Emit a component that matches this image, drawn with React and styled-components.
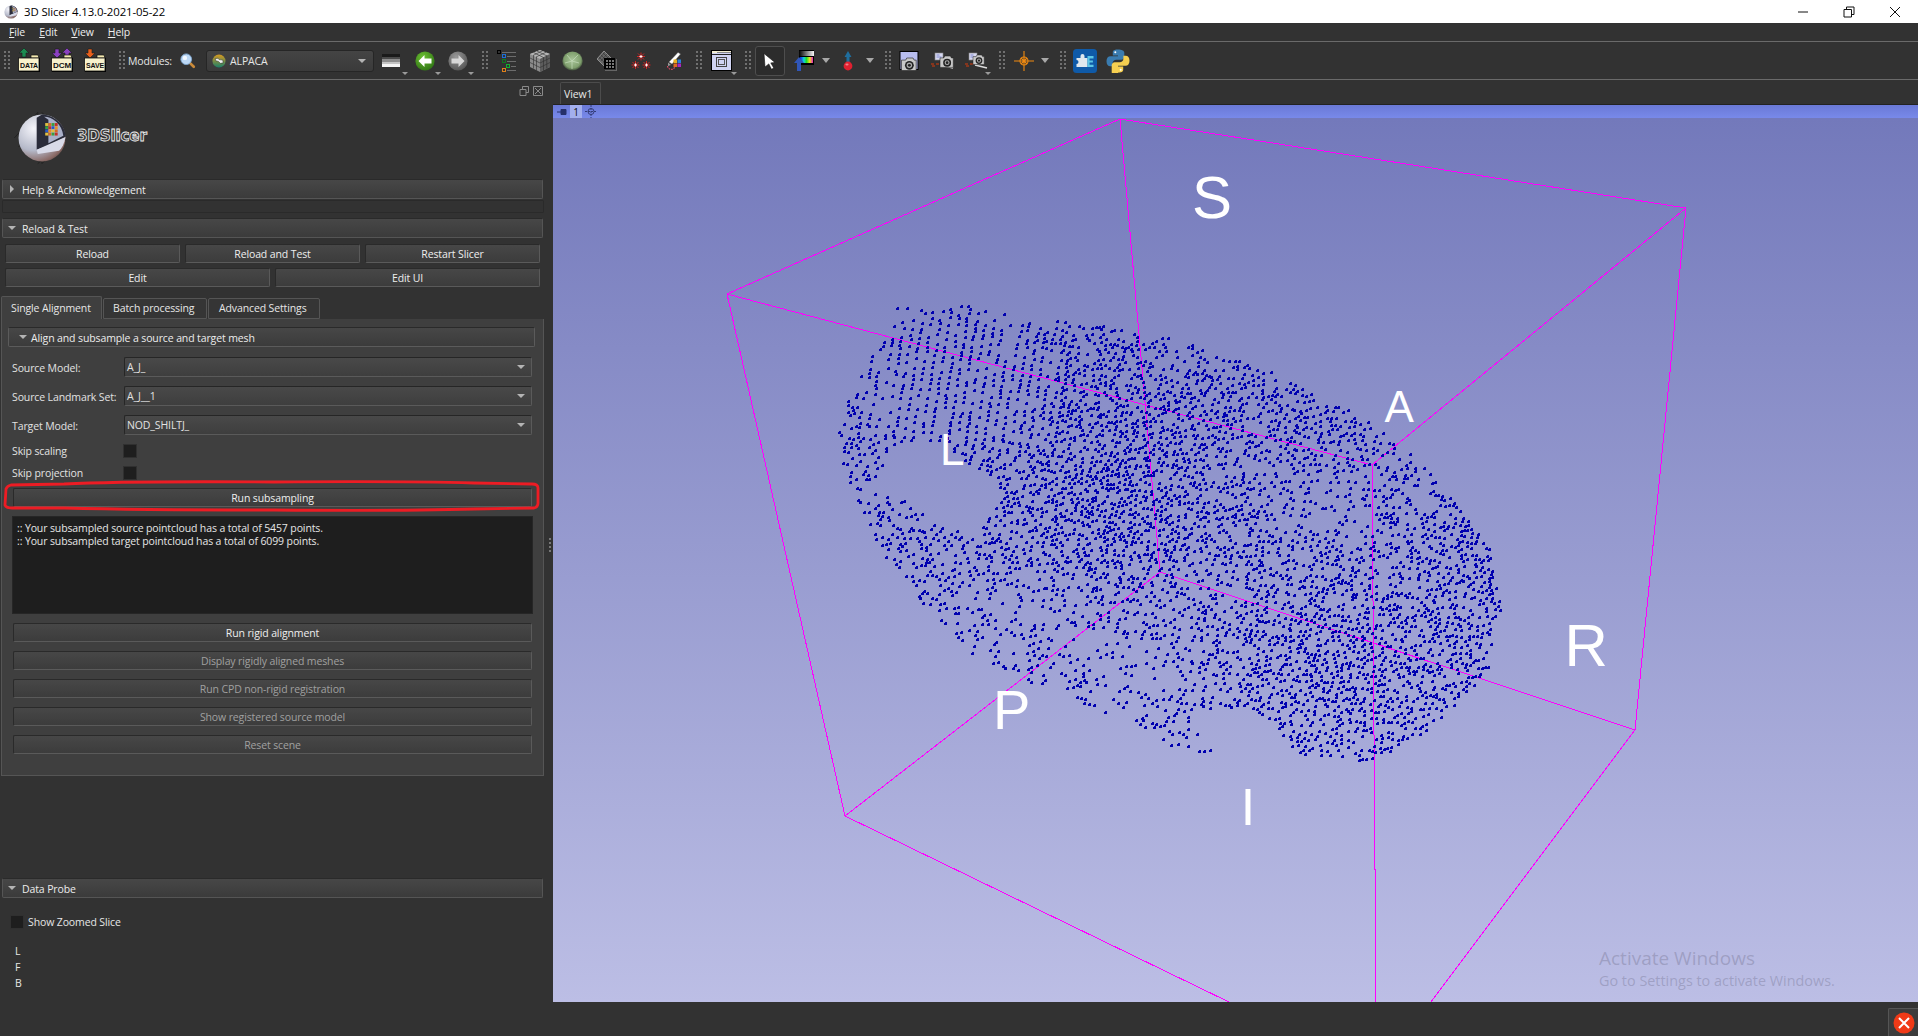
import { useMemo } from "react";
import styled, { createGlobalStyle } from "styled-components";

const GlobalStyle = createGlobalStyle`
  html, body { margin: 0; padding: 0; background: #323232; }
  body { font-family: "Open Sans", "Noto Sans", sans-serif; font-size: 10.5px; letter-spacing: -0.12px; color: #e6e6e6; overflow: hidden; }
  * { box-sizing: border-box; }
`;

const Page = styled.div`
  width: 1918px;
  height: 1036px;
  display: flex;
  flex-direction: column;
  background: #323232;
`;

const TitleBar = styled.div`
  height: 23px;
  background: #fff;
  display: flex;
  align-items: center;
  color: #000;
  font-size: 11.4px;
  padding-left: 2px;
`;
const TitleText = styled.span`
  margin-left: 4px;
  flex: 1;
`;
const WinButton = styled.div`
  width: 46px;
  height: 23px;
  display: flex;
  align-items: center;
  justify-content: center;
`;

const MenuBar = styled.div`
  height: 19px;
  display: flex;
  align-items: center;
  border-bottom: 1px solid #6a6a6a;
  padding-left: 9px;
  gap: 14px;
  color: #eee;
`;
const MenuItem = styled.span`
  &::first-letter { text-decoration: underline; }
`;

const Toolbar = styled.div`
  height: 38px;
  display: flex;
  align-items: center;
  border-bottom: 1px solid #6a6a6a;
`;
const Grip = styled.div`
  width: 6px;
  height: 20px;
  flex: none;
  margin-left: ${(p) => p.$ml}px;
  margin-right: ${(p) => p.$mr ?? 2}px;
  background: repeating-linear-gradient(to bottom, #707070 0 2px, transparent 2px 4px);
  -webkit-mask: repeating-linear-gradient(to right, #000 0 2px, transparent 2px 4px);
  mask: repeating-linear-gradient(to right, #000 0 2px, transparent 2px 4px);
`;
const Tool = styled.div`
  position: relative;
  width: ${(p) => p.$w ?? 33}px;
  height: 28px;
  flex: none;
  display: flex;
  align-items: center;
  justify-content: center;
`;
const ActiveTool = styled(Tool)`
  height: 30px;
  background: #2c2c2c;
  border: 1px solid #4e4e4e;
  border-radius: 3px;
`;
const Caret = styled.span`
  width: 0;
  height: 0;
  flex: none;
  border-left: 4px solid transparent;
  border-right: 4px solid transparent;
  border-top: 5px solid #a8a8a8;
`;
const MiniCaret = styled.span`
  position: absolute;
  right: ${(p) => p.$r ?? 2}px;
  bottom: 0;
  width: 0;
  height: 0;
  border-left: 3px solid transparent;
  border-right: 3px solid transparent;
  border-top: 3px solid #9a9a9a;
`;
const ModulesLabel = styled.span`
  width: 43px;
  flex: none;
  margin-left: 1px;
  white-space: nowrap;
`;
const ModuleCombo = styled.div`
  width: 168px;
  height: 22px;
  flex: none;
  margin-left: 2px;
  display: flex;
  align-items: center;
  gap: 4px;
  padding-left: 5px;
  position: relative;
  background: linear-gradient(#444, #3a3a3a);
  border: 1px solid #262626;
  border-radius: 3px;
  &::after {
    content: "";
    position: absolute;
    right: 7px;
    top: 8px;
    border-left: 4px solid transparent;
    border-right: 4px solid transparent;
    border-top: 4px solid #b4b4b4;
  }
`;

const Main = styled.div`
  flex: 1;
  display: flex;
  min-height: 0;
`;

const Dock = styled.div`
  width: 553px;
  flex: none;
  padding: 0 9px 0 2px;
  position: relative;
  display: flex;
  flex-direction: column;
`;
const DockTitle = styled.div`
  height: 20px;
  display: flex;
  justify-content: flex-end;
  align-items: center;
  gap: 4px;
  padding: 0 1px 0 0;
`;
const DockIcon = styled.span`
  width: 10px;
  height: 10px;
  display: block;
`;
const Splitter = styled.div`
  position: absolute;
  right: 2px;
  top: 458px;
  width: 2px;
  height: 16px;
  background: repeating-linear-gradient(to bottom, #777 0 2px, transparent 2px 4px);
`;
const LogoRow = styled.div`
  height: 79px;
  display: flex;
  align-items: center;
  padding: 0 0 4px 8px;
  gap: 3px;
`;
const LogoText = styled.span`
  font-family: "DejaVu Sans", sans-serif;
  font-weight: 700;
  font-size: 15.2px;
  letter-spacing: -0.2px;
  color: #3a3a3a;
  -webkit-text-stroke: 0.8px #f0f0f0;
  margin-top: -4px;
`;

const CollapseHeader = styled.div`
  height: 20px;
  flex: none;
  display: flex;
  align-items: center;
  position: relative;
  margin-right: ${(p) => (p.$inner ? 0 : 1)}px;
  padding: 1px 0 0 ${(p) => (p.$inner ? 22 : 19)}px;
  background: linear-gradient(#474747, #3b3b3b);
  border: 1px solid #555;
  border-top-color: #2a2a2a;
  border-radius: 2px;
  color: #ececec;
`;
const DownArrow = styled.span`
  position: absolute;
  left: ${(p) => p.$left ?? 5}px;
  top: 7px;
  border-left: 4px solid transparent;
  border-right: 4px solid transparent;
  border-top: 4px solid #b4b4b4;
`;
const RightArrow = styled.span`
  position: absolute;
  left: 7px;
  top: 5px;
  border-top: 4px solid transparent;
  border-bottom: 4px solid transparent;
  border-left: 4px solid #b4b4b4;
`;
const EmptyFrame = styled.div`
  height: 13px;
  margin: 1px 0 5px;
  border: 1px solid #2a2a2a;
  border-radius: 1px;
`;
const ButtonGrid = styled.div`
  display: grid;
  grid-template-columns: repeat(${(p) => p.$cols}, 1fr);
  gap: 5px;
  padding: 0 4px 0 3px;
  margin-top: ${(p) => p.$top}px;
`;
const PushButton = styled.div`
  height: 19px;
  display: flex;
  align-items: center;
  justify-content: center;
  background: linear-gradient(#474747, #3c3c3c);
  border: 1px solid #5a5a5a;
  border-top-color: #2a2a2a;
  border-left-color: #2a2a2a;
  border-radius: 2px;
  color: ${(p) => (p.$disabled ? "#a0a0a0" : "#eee")};
`;
const ActionButton = styled(PushButton)`
  margin-left: 1px;
`;

const TabRow = styled.div`
  display: flex;
  align-items: flex-end;
  gap: 1px;
  margin: 9px 0 0 -1px;
  height: 23px;
`;
const Tab = styled.div`
  width: ${(p) => p.$w}px;
  height: ${(p) => (p.$active ? 23 : 21)}px;
  padding: 0 0 1px ${(p) => p.$pad}px;
  display: flex;
  align-items: center;
  background: ${(p) => (p.$active ? "#3f3f3f" : "#353535")};
  border: 1px solid #555;
  border-bottom: ${(p) => (p.$active ? "none" : "1px solid #555")};
  border-radius: 2px 2px 0 0;
`;
const TabPane = styled.div`
  height: 457px;
  margin-left: -1px;
  padding: 8px 11px 0 10px;
  background: #3f3f3f;
  border: 1px solid #555;
  border-top: none;
  display: flex;
  flex-direction: column;
`;
const InnerHeader = styled(CollapseHeader)`
  margin: 0 -3px 0 -4px;
  border-color: #5b5b5b;
  border-top-color: #2a2a2a;
`;
const FormRows = styled.div`
  display: grid;
  gap: 9px;
  margin-top: 10px;
`;
const FormRow = styled.div`
  display: grid;
  grid-template-columns: 112px 1fr;
  align-items: center;
  color: #e2e2e2;
  > span { padding-top: 1px; }
`;
const ComboBox = styled.div`
  height: 20px;
  display: flex;
  align-items: center;
  padding-left: 2px;
  position: relative;
  background: linear-gradient(#494949, #3e3e3e);
  border: 1px solid #262626;
  border-right-color: #5a5a5a;
  border-bottom-color: #5a5a5a;
  border-radius: 2px;
  &::after {
    content: "";
    position: absolute;
    right: 6px;
    top: 7px;
    border-left: 4px solid transparent;
    border-right: 4px solid transparent;
    border-top: 4px solid #b4b4b4;
  }
`;
const CheckRows = styled.div`
  display: grid;
  gap: 8px;
  margin-top: 8px;
`;
const CheckRow = styled.div`
  display: grid;
  grid-template-columns: 111px 14px;
  height: 14px;
  align-items: center;
  color: #e2e2e2;
  > span:first-child { padding-top: 1px; }
`;
const CheckBox = styled.span`
  width: 14px;
  height: 14px;
  display: block;
  background: #1e1e1e;
  border: 1px solid #303030;
`;
const ActionStack = styled.div`
  display: grid;
  gap: 9px;
  margin-top: 9px;
`;
const Highlighted = styled.div`
  position: relative;
`;
const RedOval = styled.svg`
  position: absolute;
  left: -8px;
  top: -7px;
  width: 536px;
  height: 32px;
  overflow: visible;
`;
const OutputBox = styled.div`
  height: 98px;
  margin-right: -1px;
  padding: 5px 4px;
  background: #1e1e1e;
  border: 1px solid #262626;
  line-height: 12.5px;
  color: #e6e6e6;
`;
const ProbeHeader = styled(CollapseHeader)`
  margin-top: 102px;
`;
const ZoomRow = styled.div`
  display: flex;
  align-items: center;
  gap: 4px;
  margin: 16px 0 0 8px;
  > span:last-child { padding-top: 1px; }
`;
const ProbeLines = styled.div`
  margin: 14px 0 0 13px;
  line-height: 16px;
`;

const RightColumn = styled.div`
  flex: 1;
  display: flex;
  flex-direction: column;
  min-width: 0;
`;
const ViewTabs = styled.div`
  height: 25px;
  padding: 2px 0 0 7px;
  display: flex;
  border-bottom: 1px solid #222;
`;
const ViewTab = styled.div`
  width: 41px;
  display: flex;
  align-items: center;
  padding-left: 3px;
  border: 1px solid #4c4c4c;
  border-bottom: none;
  border-radius: 2px 2px 0 0;
  color: #e8e8e8;
`;
const ViewController = styled.div`
  height: 13px;
  flex: none;
  display: flex;
  align-items: center;
  padding-left: 4px;
  background: linear-gradient(#6a79d6, #7889ea);
`;
const PinIcon = styled.svg`
  width: 10px;
  height: 8px;
  margin-right: 3px;
`;
const ViewCross = styled.svg`
  width: 14px;
  height: 13px;
  margin-left: 2px;
`;
const ViewNumber = styled.span`
  width: 12px;
  height: 13px;
  display: flex;
  align-items: center;
  justify-content: center;
  background: #a3afee;
  color: #111;
  font-size: 10px;
`;
const Viewport = styled.div`
  position: relative;
  flex: 1;
  overflow: hidden;
  background: linear-gradient(#7379bb, #bcbee5);
`;
const SceneSvg = styled.svg`
  display: block;
  width: 100%;
  height: 100%;
`;
const SceneLabel = styled.text`
  font-family: "Liberation Sans", Arial, sans-serif;
  fill: #fff;
`;
const Watermark = styled.div`
  position: absolute;
  left: 1046px;
  top: 828px;
  letter-spacing: 0;
  color: rgba(120, 120, 150, 0.42);
  font-family: "Open Sans", sans-serif;
`;
const WatermarkTitle = styled.div`
  font-size: 19px;
  line-height: 24px;
`;
const WatermarkSub = styled.div`
  font-size: 14.4px;
  line-height: 22px;
`;
const StatusBar = styled.div`
  height: 34px;
  flex: none;
  display: flex;
  justify-content: flex-end;
  align-items: flex-end;
`;
const StatusButton = styled.div`
  width: 30px;
  height: 28px;
  display: flex;
  align-items: center;
  justify-content: center;
  background: #3c3c3c;
  border: 1px solid #555;
  border-right: none;
  border-bottom: none;
  border-radius: 2px 0 0 0;
`;

/* ---------- toolbar icons ---------- */

const Arrow = ({ x, color, down }) => (
  <path
    d={down ? `M${x - 2} 1h4v4h3l-5 5-5-5h3z` : `M${x} 0l5 5h-3v4h-4v-4h-3z`}
    fill={color}
    stroke="#1c1c1c"
    strokeWidth="0.6"
  />
);

const FolderIcon = ({ label, children }) => (
  <svg width="24" height="26" viewBox="0 0 24 26">
    {children}
    <path d="M14 7h7l1 3H14z" fill="#f3e8b0" stroke="#111" strokeWidth="0.7" />
    <rect x="2" y="10" width="21" height="14" fill="#000" />
    <rect x="1.5" y="10" width="20.5" height="13" fill="#f8f2cc" stroke="#111" strokeWidth="0.8" />
    <text x="3" y="20" fontFamily="Liberation Sans, sans-serif" fontSize="7.5" fontWeight="700" fill="#111" textLength="18" lengthAdjust="spacingAndGlyphs">
      {label}
    </text>
  </svg>
);

const SearchIcon = () => (
  <svg width="16" height="16" viewBox="0 0 18 18">
    <path d="M10.5 10.5l5 5" stroke="#c98a3a" strokeWidth="3" strokeLinecap="round" />
    <circle cx="7" cy="7" r="6" fill="#bcd8f5" stroke="#7fa8d2" />
    <circle cx="5.5" cy="5.5" r="2.5" fill="#f2f8ff" />
  </svg>
);

const AlpacaIcon = () => (
  <svg width="14" height="14" viewBox="0 0 15 15">
    <defs>
      <linearGradient id="alp" x1="0" y1="0" x2="0" y2="1">
        <stop offset="0" stopColor="#d89a20" />
        <stop offset="1" stopColor="#1a7f6a" />
      </linearGradient>
    </defs>
    <circle cx="7.5" cy="7.5" r="7" fill="url(#alp)" />
    <path d="M3.5 5l3-.5 1 1.5 4 .5.5 3-3 .5-2-2-3-.8z" fill="#f2f2f2" stroke="#222" strokeWidth="0.5" />
  </svg>
);

const GradientBars = () => (
  <svg width="18" height="13" viewBox="0 0 18 13" shapeRendering="crispEdges">
    {["#1a1a1a", "#4a4a4a", "#8c8c8c", "#c4c4c4", "#f4f4f4"].map((c, i) => (
      <rect key={c} x="0" y={i * 2.6} width="18" height="2.6" fill={c} />
    ))}
  </svg>
);

const NavIcon = ({ back, outer, inner }) => (
  <svg width="20" height="20" viewBox="0 0 20 20">
    <defs>
      <radialGradient id={back ? "navb" : "navf"} cx="0.4" cy="0.3" r="0.8">
        <stop offset="0" stopColor={inner} />
        <stop offset="1" stopColor={outer} />
      </radialGradient>
    </defs>
    <circle cx="10" cy="10" r="9.6" fill={`url(#${back ? "navb" : "navf"})`} />
    <path
      d={back ? "M3.5 10l6-6v3.6h7v4.8h-7V16z" : "M16.5 10l-6-6v3.6h-7v4.8h7V16z"}
      fill={back ? "#fff" : "#d8d8d8"}
    />
  </svg>
);

const ListIcon = () => (
  <svg width="22" height="22" viewBox="0 0 22 22" shapeRendering="crispEdges" fill="none">
    <rect x="1" y="0.5" width="3" height="3" stroke="#000" />
    <rect x="6" y="4.5" width="3" height="3" stroke="#1c6fd8" />
    <rect x="6" y="9.5" width="3" height="3" stroke="#0e7a20" />
    <rect x="10" y="14.5" width="3" height="3" stroke="#12b030" />
    <rect x="6" y="18.5" width="3" height="3" stroke="#e0801a" />
    <path d="M6 2h14M11 6h9M11 11h9M15 16h5M11 20h9" stroke="#6c6c6c" />
  </svg>
);

const CubeIcon = () => (
  <svg width="22" height="24" viewBox="0 0 22 24">
    <path d="M11 1l10 4v13l-10 5-10-5V5z" fill="#8a8a8a" />
    <path d="M11 1l10 4-10 5L1 5z" fill="#b4b4b4" />
    <path d="M11 10l10-5v13l-10 5z" fill="#5c5c5c" />
    <path d="M1 9l10 5 10-5M1 13.5l10 5 10-5M4.5 6.5v13M7.5 8v13.5M14.5 8.3v13.5M17.8 6.7v13M4.5 3.5l10 5M8 2l10 5M7 8L17.5 3M4 6.5l10-5" stroke="#2e2e2e" strokeWidth="0.6" fill="none" />
  </svg>
);

const ModelSphere = () => (
  <svg width="21" height="20" viewBox="0 0 21 20">
    <defs>
      <radialGradient id="msph" cx="0.5" cy="0.45" r="0.55">
        <stop offset="0" stopColor="#a9c59a" />
        <stop offset="0.75" stopColor="#80a06e" />
        <stop offset="1" stopColor="#3c4a36" />
      </radialGradient>
    </defs>
    <ellipse cx="10.5" cy="10" rx="10.2" ry="9.6" fill="url(#msph)" />
    <path d="M5 4l5 6 6-6M3 12l7-2 7 2M10 10v8" stroke="#c6dcbc" strokeWidth="0.7" fill="none" />
  </svg>
);

const VolumeGrid = () => (
  <svg width="20" height="20" viewBox="0 0 20 20" shapeRendering="crispEdges">
    <path d="M7 0l7 7-7 8-7-7z" fill="#666" stroke="#bbb" strokeWidth="0.6" shapeRendering="auto" />
    <path d="M2 8l6-7M4 10l6-7M6 12l6-7M2 6l7 7M4 4l7 7M6 2l7 7" stroke="#2a2a2a" strokeWidth="0.5" shapeRendering="auto" />
    <rect x="7" y="7" width="11" height="11" fill="#000" />
    {[9, 12, 15].flatMap((x) =>
      [9, 12, 15].map((y) => <rect key={`${x}-${y}`} x={x} y={y} width="2" height="2" fill="#777" />)
    )}
    <path d="M19 8v11H8" fill="none" stroke="#666" />
  </svg>
);

const Star = ({ x, y }) => (
  <g stroke="#e32020" strokeWidth="0.9">
    <path d={`M${x - 4} ${y}h8M${x} ${y - 4}v8M${x - 3} ${y - 3}l6 6M${x + 3} ${y - 3}l-6 6`} />
    <path d={`M${x - 1.5} ${y}h3M${x} ${y - 1.5}v3`} stroke="#fff" strokeWidth="1" />
  </g>
);
const FiducialsIcon = () => (
  <svg width="20" height="18" viewBox="0 0 20 18">
    <Star x={10} y={4.5} />
    <Star x={4.5} y={13} />
    <Star x={15.5} y={13} />
  </svg>
);

const SegmentIcon = () => (
  <svg width="18" height="20" viewBox="0 0 18 20">
    <path d="M4 11L13 1.5l2.5 1.5L7 13z" fill="#fff" stroke="#777" strokeWidth="0.4" />
    <path d="M3 11.5l3 2.5-3 1z" fill="#999" />
    <path d="M2.5 15c.5 3 3.5 4 6 3l2-3" fill="none" stroke="#e24a6a" strokeWidth="1.1" strokeDasharray="1.6 1" />
    <rect x="8.5" y="8.5" width="3.5" height="3.5" fill="#e8b020" />
    <rect x="12.5" y="8.5" width="3.5" height="3.5" fill="#2a80d8" />
    <rect x="8.5" y="12.5" width="3.5" height="3.5" fill="#e06820" />
    <rect x="12.5" y="12.5" width="3.5" height="3.5" fill="#a828c0" />
  </svg>
);

const LayoutIcon = () => (
  <svg width="22" height="22" viewBox="0 0 22 22" shapeRendering="crispEdges">
    <rect x="0.5" y="0.5" width="20" height="20" fill="#d0d3f2" stroke="#000" />
    <rect x="1" y="1" width="19" height="2" fill="#f2ecd0" />
    <path d="M1 4h19" stroke="#222" />
    <path d="M6 2h14" stroke="#888" />
    <rect x="5.5" y="7.5" width="10" height="9" fill="none" stroke="#444" />
    <rect x="7.5" y="9.5" width="6" height="5" fill="none" stroke="#555" />
  </svg>
);

const PointerIcon = () => (
  <svg width="18" height="18" viewBox="0 0 18 18">
    <path d="M3 1.5l11 9-4.2.4 3 5.2-2.3 1.2-2.7-5.4L4 15z" fill="#fff" stroke="#111" strokeWidth="0.6" />
  </svg>
);

const ColorBarIcon = () => (
  <svg width="20" height="22" viewBox="0 0 20 22" shapeRendering="crispEdges">
    <defs>
      <linearGradient id="rainbow">
        <stop offset="0" stopColor="#1020e0" />
        <stop offset="0.3" stopColor="#10d0e0" />
        <stop offset="0.5" stopColor="#20e020" />
        <stop offset="0.75" stopColor="#f0e020" />
        <stop offset="1" stopColor="#e020c0" />
      </linearGradient>
      <linearGradient id="greyramp">
        <stop offset="0" stopColor="#000" />
        <stop offset="1" stopColor="#eee" />
      </linearGradient>
    </defs>
    <rect x="5" y="0" width="15" height="15" fill="#000" />
    <rect x="5" y="0.5" width="14.5" height="5" fill="url(#greyramp)" />
    <rect x="6" y="6.5" width="13" height="6" fill="url(#rainbow)" />
    <path d="M5 7l5 6H7v8H3v-8H0z" fill="#3056b8" shapeRendering="auto" />
  </svg>
);

const FiducialPlace = () => (
  <svg width="12" height="20" viewBox="0 0 12 20">
    <path d="M6 0l3.5 6H7.5v8h-3V6H2.5z" fill="#1f6e9e" />
    <circle cx="6" cy="15" r="4.4" fill="#e02030" />
    <ellipse cx="5" cy="13.5" rx="1.6" ry="1" fill="#f08088" />
  </svg>
);

const CameraGlyph = ({ x, y, s = 1 }) => (
  <g transform={`translate(${x} ${y}) scale(${s})`}>
    <path d="M0 2h4l1-2h6l1 2h2v10H0z" fill="#c8c8c8" stroke="#222" strokeWidth="0.6" />
    <circle cx="7.5" cy="7" r="4.2" fill="#222" />
    <circle cx="7.5" cy="7" r="2.6" fill="#aaa" />
    <circle cx="7.5" cy="7" r="1.4" fill="#222" />
  </g>
);

const ScreenshotIcon = () => (
  <svg width="20" height="20" viewBox="0 0 20 20">
    <rect x="1" y="0.5" width="18" height="18" fill="#b8bdf0" stroke="#000" />
    <CameraGlyph x={2.5} y={7} s={1.05} />
  </svg>
);

const SceneViewIcon = ({ small }) => (
  <svg width="24" height="20" viewBox="0 0 24 20">
    <rect x="4" y="2" width="8" height="7" fill="#d6d8f0" stroke="#888" strokeWidth="0.6" />
    <path d="M5.5 4h3M5.5 6h5" stroke="#6f78c8" strokeWidth="0.8" />
    <path d="M0 13h3M5 13h3M1 15h3" stroke="#a03818" strokeWidth="1.3" />
    <path d="M10 14l12 3" stroke="#ddd" strokeWidth="1.4" />
    <CameraGlyph x={small ? 8 : 9} y={small ? 4 : 5} s={small ? 0.8 : 0.95} />
  </svg>
);

const CrosshairIcon = () => (
  <svg width="20" height="20" viewBox="0 0 20 20" fill="none" stroke="#f08a10" strokeWidth="1.1">
    <circle cx="10" cy="10" r="4" />
    <path d="M10 0v20M0 10h20M7 7l6 6M13 7l-6 6" />
  </svg>
);

const ExtensionsIcon = () => (
  <svg width="24" height="24" viewBox="0 0 24 24">
    <rect width="24" height="24" rx="3.5" fill="#0f5aa8" />
    <path d="M3.5 9h4V7a2 2 0 0 1 4 0v2h3v9h-11v-3a2 2 0 0 0 0-4z" fill="#dfe8ee" />
    <path d="M14.5 7h6v2.4h-4v2h3.4v2.2h-3.4v2.1h4V18h-6z" fill="#5cc6e6" />
  </svg>
);

const PythonIcon = () => (
  <svg width="24" height="24" viewBox="0 0 24 24">
    <path
      d="M11.8 0.5C6.5 0.5 6.8 2.8 6.8 4v2.4h5.2v.9H4.600C2 7.300.500 9.200.500 12.300c0 3.200 1.600 5 3.800 5h2.300v-3c0-2 1.700-3.500 3.700-3.500h5c1.700 0 3-1.400 3-3.100V3.800C18.300 1.800 16 .5 11.800 .5z"
      fill="#3a7cb0"
    />
    <path
      d="M12.200 23.500c5.300 0 5-2.300 5-3.500v-2.400H12v-.9h7.400c2.600 0 4.100-1.900 4.100-5 0-3.200-1.600-5-3.800-5h-2.300v3c0 2-1.700 3.500-3.700 3.500h-5c-1.700 0-3 1.400-3 3.100v6.900c0 2 2.300 3.300 6.500 3.300z"
      fill="#f6cf50"
    />
    <circle cx="9.300" cy="3.300" r="1" fill="#fff" />
    <circle cx="14.700" cy="20.700" r="1" fill="#fff" />
  </svg>
);

const SlicerMark = ({ size }) => (
  <svg width={size} height={size} viewBox="0 0 60 60">
    <defs>
      <radialGradient id={`sl${size}`} cx="0.32" cy="0.3" r="0.85">
        <stop offset="0" stopColor="#f4f4fa" />
        <stop offset="0.55" stopColor="#b4b8c8" />
        <stop offset="0.85" stopColor="#8a6a66" />
        <stop offset="1" stopColor="#4a3836" />
      </radialGradient>
    </defs>
    {size > 20 && (
      <path d="M4 30L26 6l4 48L52 32 30 6M8 38l40-20M26 54l26-22" fill="none" stroke="#1f1f1f" strokeWidth="0.8" />
    )}
    <circle cx="30" cy="30" r="22" fill={`url(#sl${size})`} />
    <path d="M30 8c10 0 22 9 22 21l-16 8-11 4V11z" fill="#2a2c3a" />
    <path d="M32 10c8 0 17 7 18 18l-14 7V13z" fill="#aab0c8" />
    {[0, 1, 2, 3].flatMap((r) =>
      [0, 1, 2, 3].map((c) => (
        <rect
          key={`${r}${c}`}
          x={33 + c * 3}
          y={16 + r * 3}
          width="2.7"
          height="2.7"
          fill={["#e0c040", "#d86a20", "#38a040", "#c03028", "#2858c8", "#e89028"][(r * 2 + c) % 6]}
        />
      ))
    )}
    <path d="M25 41l27-12c-1 6-3 10-6 13l-20 3z" fill="#d8dae8" />
  </svg>
);

const WinGlyph = ({ d }) => (
  <svg width="12" height="12" viewBox="0 0 12 12" fill="none" stroke="#111" strokeWidth="1">
    <path d={d} />
  </svg>
);

const DockGlyph = ({ d }) => (
  <DockIcon>
    <svg width="10" height="10" viewBox="0 0 10 10" fill="none" stroke="#8a8a8a" strokeWidth="1">
      <path d={d} />
    </svg>
  </DockIcon>
);

/* ---------- point cloud ---------- */

const fromZoom = (pts) => pts.map(([x, y]) => [820 + x / 2.24, 290 + y / 3]);

const OUTLINE = fromZoom([
  [155, 45], [300, 40], [470, 80], [720, 115], [960, 210], [1130, 320], [1280, 430], [1400, 600],
  [1500, 780], [1525, 930], [1500, 1130], [1420, 1240], [1340, 1340], [1240, 1410], [1070, 1390],
  [1010, 1300], [960, 1250], [880, 1250], [850, 1300], [880, 1395], [800, 1380], [680, 1290],
  [480, 1180], [340, 1090], [230, 950], [130, 770], [85, 640], [45, 520], [40, 420], [60, 320],
  [100, 240], [125, 155], [165, 130],
]);
const HOLE = fromZoom([
  [130, 560], [150, 490], [220, 430], [320, 510], [400, 590], [395, 640], [350, 735], [290, 715],
  [230, 670], [170, 615], [110, 590],
]);

const inside = (poly, x, y) => {
  let hit = false;
  for (let i = 0, j = poly.length - 1; i < poly.length; j = i++) {
    const [xi, yi] = poly[i];
    const [xj, yj] = poly[j];
    if (yi > y !== yj > y && x < ((xj - xi) * (y - yi)) / (yj - yi) + xi) hit = !hit;
  }
  return hit;
};

const bump = (x, y, cx, cy, sx, sy) => Math.exp(-((x - cx) ** 2) / (2 * sx * sx) - ((y - cy) ** 2) / (2 * sy * sy));

const MAX_DENSITY = 0.07;

// points per square pixel, read off the reference by eye
const density = (x, y) => {
  const d =
    0.026 +
    bump(x, y, 1110, 490, 75, 60) * 0.04 +
    bump(x, y, 1325, 670, 60, 36) * 0.036 +
    bump(x, y, 1470, 560, 28, 90) * 0.02 +
    bump(x, y, 1060, 370, 85, 40) * 0.014 +
    bump(x, y, 1290, 415, 70, 25) * 0.014 +
    bump(x, y, 1290, 590, 60, 25) * 0.012 -
    bump(x, y, 1040, 620, 100, 60) * 0.012 -
    bump(x, y, 1137, 670, 55, 40) * 0.01 -
    bump(x, y, 1310, 500, 55, 40) * 0.012;
  return Math.min(d, MAX_DENSITY);
};

const buildCloud = () => {
  let seed = 20210522;
  const rand = () => {
    seed = (seed + 0x6d2b79f5) | 0;
    let t = Math.imul(seed ^ (seed >>> 15), 1 | seed);
    t = (t + Math.imul(t ^ (t >>> 7), 61 | t)) ^ t;
    return ((t ^ (t >>> 14)) >>> 0) / 4294967296;
  };
  const buckets = new Map();
  let d = "";
  const candidates = 685 * 480 * MAX_DENSITY;
  for (let n = 0; n < candidates; n++) {
    let x = 835 + rand() * 685;
    const y = 295 + rand() * 480;
    if (!inside(OUTLINE, x, y) || inside(HOLE, x, y)) continue;
    if (rand() > density(x, y) / MAX_DENSITY) continue;
    // the upper left of the surface shows its scan columns
    const column = bump(x, y, 960, 380, 70, 55);
    if (column > 0.25) {
      const u = x + y * 0.16;
      x += (Math.round(u / 9) * 9 - u) * Math.min(column * 1.4, 0.85);
    }
    const cx = Math.floor(x / 5);
    const cy = Math.floor(y / 5);
    let ok = true;
    for (let a = cx - 1; a <= cx + 1 && ok; a++) {
      for (let b = cy - 1; b <= cy + 1 && ok; b++) {
        for (const [px, py] of buckets.get(`${a},${b}`) || []) {
          if ((px - x) ** 2 + (py - y) ** 2 < 8) {
            ok = false;
            break;
          }
        }
      }
    }
    if (!ok) continue;
    const k = `${cx},${cy}`;
    if (!buckets.has(k)) buckets.set(k, []);
    buckets.get(k).push([x, y]);
    const px = Math.round(x);
    const py = Math.round(y);
    d += `M${px + 1} ${py}h2v3h-3v-2h1z`;
  }
  return d;
};

const BOX_LINES =
  "M1120 119L1686 208M1120 119L727 294M727 294L1372 465M1686 208L1372 465" +
  "M727 294L845 816M1686 208L1635 730M1372 465L1376 1002M1120 119L1160 572" +
  "M845 816L1160 572M1160 572L1635 730M845 816L1229 1002M1635 730L1431 1002";

const Scene = () => {
  const cloud = useMemo(buildCloud, []);
  return (
    <SceneSvg viewBox="553 118 1365 884" preserveAspectRatio="none">
      <path d={BOX_LINES} fill="none" stroke="#ff00ff" strokeWidth="1" shapeRendering="crispEdges" />
      <path d={cloud} fill="#0000b0" shapeRendering="crispEdges" />
      <SceneLabel x="1212" y="218" fontSize="60" textAnchor="middle">S</SceneLabel>
      <SceneLabel x="1399" y="422" fontSize="44" textAnchor="middle">A</SceneLabel>
      <SceneLabel x="940" y="465" fontSize="44">L</SceneLabel>
      <SceneLabel x="1586" y="666" fontSize="60" textAnchor="middle">R</SceneLabel>
      <SceneLabel x="993" y="729" fontSize="56">P</SceneLabel>
      <SceneLabel x="1248" y="825" fontSize="52" textAnchor="middle">I</SceneLabel>
    </SceneSvg>
  );
};

const App = () => (
  <Page>
    <GlobalStyle />
    <TitleBar>
      <SlicerMark size={18} />
      <TitleText>3D Slicer 4.13.0-2021-05-22</TitleText>
      <WinButton><WinGlyph d="M1 6h10" /></WinButton>
      <WinButton><WinGlyph d="M1 3.500h7.500v7.500H1zM3.500 3.500V1H11v7.500H8.500" /></WinButton>
      <WinButton><WinGlyph d="M1 1l10 10M11 1L1 11" /></WinButton>
    </TitleBar>
    <MenuBar>
      <MenuItem>File</MenuItem>
      <MenuItem>Edit</MenuItem>
      <MenuItem>View</MenuItem>
      <MenuItem>Help</MenuItem>
    </MenuBar>
    <Toolbar>
      <Grip $ml={4} />
      <Tool>
        <FolderIcon label="DATA"><Arrow x={7} color="#1c8a50" /></FolderIcon>
      </Tool>
      <Tool>
        <FolderIcon label="DCM">
          <Arrow x={7} color="#8a40c0" down />
          <Arrow x={17} color="#8a40c0" />
        </FolderIcon>
      </Tool>
      <Tool>
        <FolderIcon label="SAVE"><Arrow x={7} color="#e8601c" down /></FolderIcon>
      </Tool>
      <Grip $ml={8} />
      <ModulesLabel>Modules:</ModulesLabel>
      <Tool $w={33}><SearchIcon /></Tool>
      <ModuleCombo><AlpacaIcon />ALPACA</ModuleCombo>
      <Tool $w={34}><GradientBars /><MiniCaret $r={0} /></Tool>
      <Tool><NavIcon back outer="#2a6e12" inner="#6cc032" /><MiniCaret $r={0} /></Tool>
      <Tool><NavIcon outer="#4e4e4e" inner="#9a9a9a" /><MiniCaret $r={0} /></Tool>
      <Grip $ml={8} />
      <Tool><ListIcon /></Tool>
      <Tool><CubeIcon /></Tool>
      <Tool><ModelSphere /></Tool>
      <Tool $w={35}><VolumeGrid /></Tool>
      <Tool><FiducialsIcon /></Tool>
      <Tool><SegmentIcon /></Tool>
      <Grip $ml={6} />
      <Tool $w={36}><LayoutIcon /><MiniCaret $r={3} /></Tool>
      <Grip $ml={5} $mr={4} />
      <ActiveTool $w={30}><PointerIcon /></ActiveTool>
      <Tool $w={37}><ColorBarIcon /></Tool>
      <Caret />
      <Tool $w={36}><FiducialPlace /></Tool>
      <Caret />
      <Grip $ml={11} />
      <Tool $w={32}><ScreenshotIcon /></Tool>
      <Tool $w={36}><SceneViewIcon /></Tool>
      <Tool $w={32}><SceneViewIcon small /><MiniCaret $r={2} /></Tool>
      <Grip $ml={6} />
      <Tool $w={34}><CrosshairIcon /></Tool>
      <Caret />
      <Grip $ml={11} />
      <Tool $w={34}><ExtensionsIcon /></Tool>
      <Tool $w={32}><PythonIcon /></Tool>
    </Toolbar>
    <Main>
      <Dock>
        <DockTitle>
          <DockGlyph d="M1 3.500h6v6H1zM3.500 3.500V.5h6v6H7" />
          <DockGlyph d="M.5.5h9v9h-9zM2 2l6 6M8 2L2 8" />
        </DockTitle>
        <LogoRow>
          <SlicerMark size={64} />
          <LogoText>3DSlicer</LogoText>
        </LogoRow>
        <CollapseHeader><RightArrow />Help &amp; Acknowledgement</CollapseHeader>
        <EmptyFrame />
        <CollapseHeader><DownArrow />Reload &amp; Test</CollapseHeader>
        <ButtonGrid $cols={3} $top={6}>
          <PushButton>Reload</PushButton>
          <PushButton>Reload and Test</PushButton>
          <PushButton>Restart Slicer</PushButton>
        </ButtonGrid>
        <ButtonGrid $cols={2} $top={5}>
          <PushButton>Edit</PushButton>
          <PushButton>Edit UI</PushButton>
        </ButtonGrid>
        <TabRow>
          <Tab $w={101} $pad={9} $active>Single Alignment</Tab>
          <Tab $w={104} $pad={9}>Batch processing</Tab>
          <Tab $w={112} $pad={10}>Advanced Settings</Tab>
        </TabRow>
        <TabPane>
          <InnerHeader $inner><DownArrow $left={10} />Align and subsample a source and target mesh</InnerHeader>
          <FormRows>
            <FormRow><span>Source Model:</span><ComboBox>A_J_</ComboBox></FormRow>
            <FormRow><span>Source Landmark Set:</span><ComboBox>A_J__1</ComboBox></FormRow>
            <FormRow><span>Target Model:</span><ComboBox>NOD_SHILTJ_</ComboBox></FormRow>
          </FormRows>
          <CheckRows>
            <CheckRow><span>Skip scaling</span><CheckBox /></CheckRow>
            <CheckRow><span>Skip projection</span><CheckBox /></CheckRow>
          </CheckRows>
          <ActionStack>
            <Highlighted>
              <ActionButton>Run subsampling</ActionButton>
              <RedOval viewBox="0 0 536 32" fill="none">
                <path
                  d="M7 4Q3 5 2 8L1 24Q2 27 8 27L60 27Q140 29 270 29Q400 30 470 28L530 27Q534 26 534 22L534 7Q534 3 528 3L470 2Q400 0 270 1Q120 0 60 3Z"
                  stroke="#ed1c24"
                  strokeWidth="2.8"
                />
              </RedOval>
            </Highlighted>
            <OutputBox>
              :: Your subsampled source pointcloud has a total of 5457 points.<br />
              :: Your subsampled target pointcloud has a total of 6099 points.
            </OutputBox>
            <ActionButton>Run rigid alignment</ActionButton>
            <ActionButton $disabled>Display rigidly aligned meshes</ActionButton>
            <ActionButton $disabled>Run CPD non-rigid registration</ActionButton>
            <ActionButton $disabled>Show registered source model</ActionButton>
            <ActionButton $disabled>Reset scene</ActionButton>
          </ActionStack>
        </TabPane>
        <ProbeHeader><DownArrow />Data Probe</ProbeHeader>
        <ZoomRow><CheckBox /><span>Show Zoomed Slice</span></ZoomRow>
        <ProbeLines>L<br />F<br />B</ProbeLines>
        <Splitter />
      </Dock>
      <RightColumn>
        <ViewTabs><ViewTab>View1</ViewTab></ViewTabs>
        <ViewController>
          <PinIcon viewBox="0 0 10 8"><path d="M0 4h4M4 1.500h5v5H4z" stroke="#26306a" fill="#26306a" /></PinIcon>
          <ViewNumber>1</ViewNumber>
          <ViewCross viewBox="0 0 14 13" fill="none" stroke="#333c78" strokeWidth="1">
            <circle cx="7" cy="6.500" r="3" />
            <path d="M7 0v13M1 6.500h12" strokeDasharray="2 1" />
          </ViewCross>
        </ViewController>
        <Viewport>
          <Scene />
          <Watermark>
            <WatermarkTitle>Activate Windows</WatermarkTitle>
            <WatermarkSub>Go to Settings to activate Windows.</WatermarkSub>
          </Watermark>
        </Viewport>
        <StatusBar>
          <StatusButton>
            <svg width="22" height="22" viewBox="0 0 22 22">
              <circle cx="11" cy="11" r="10.500" fill="#f03a17" />
              <path d="M6 6l10 10M16 6L6 16" stroke="#fff" strokeWidth="2" />
            </svg>
          </StatusButton>
        </StatusBar>
      </RightColumn>
    </Main>
  </Page>
);

export default App;
